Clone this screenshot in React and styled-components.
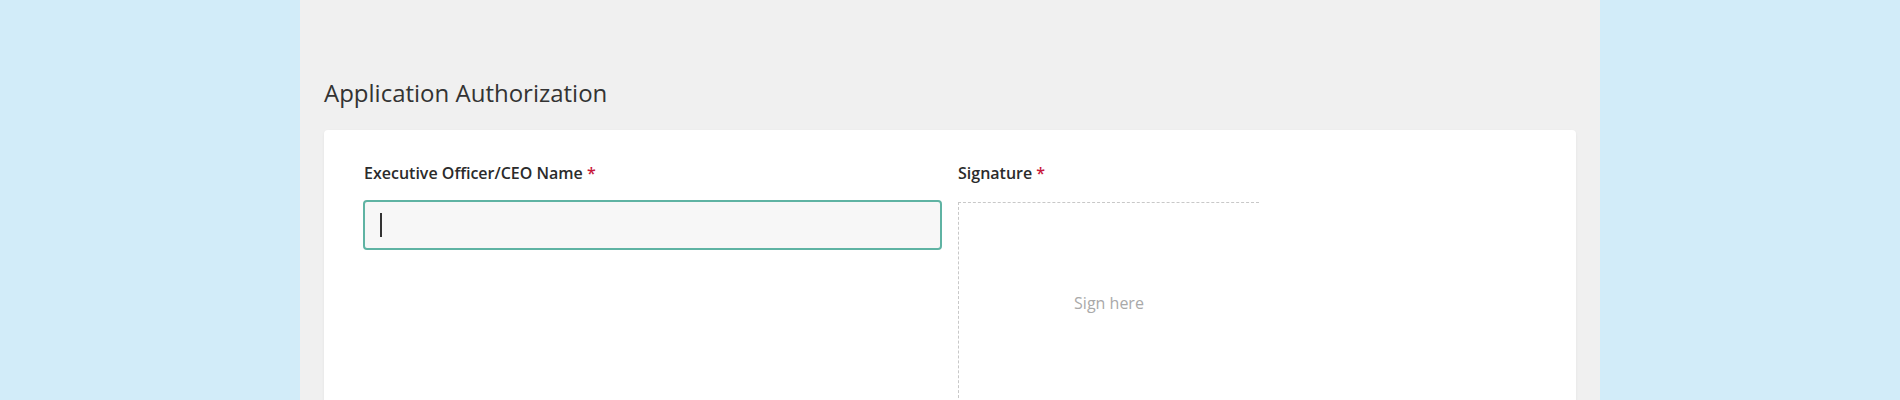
import React from "react";
import styled, { createGlobalStyle } from "styled-components";

const GlobalStyle = createGlobalStyle`
body {
    margin: 0;
    background: #d2ecf9;
    font-family: "Open Sans", "Liberation Sans", sans-serif;
}
`

export default function App(){
    return(
        <>
            <GlobalStyle />
            <Panel>
                <Title>Application Authorization</Title>
                <Card>
                    <Column>
                        <Label>Executive Officer/CEO Name <Required>*</Required></Label>
                        <Field>
                            <Caret />
                        </Field>
                    </Column>
                    <Column>
                        <Label>Signature <Required>*</Required></Label>
                        <SignPad>
                            <Placeholder>Sign here</Placeholder>
                        </SignPad>
                    </Column>
                </Card>
            </Panel>
        </>
    )
}

const Panel = styled.div`
max-width: 1300px;
height: 400px;
margin: 0 auto;
box-sizing: border-box;
padding: 76px 24px 0;
background: #f0f0f0;
overflow: hidden;
`

const Title = styled.h2`
margin: 0 0 21px;
font-size: 24px;
font-weight: 400;
color: #333;
`

const Card = styled.div`
display: grid;
grid-template-columns: 1fr 1fr;
gap: 15px;
padding: 32px 40px 40px 39px;
background: #fff;
border-radius: 4px;
box-shadow: 0 1px 3px rgba(0, 0, 0, 0.06);
`

const Column = styled.div`
display: flex;
flex-direction: column;
`

const Label = styled.div`
margin: 0 0 16px 1px;
font-size: 16px;
font-weight: 600;
color: #2b2b2b;
`

const Required = styled.span`
color: #c8193c;
`

const Field = styled.div`
display: flex;
align-items: center;
height: 50px;
box-sizing: border-box;
padding: 0 15px;
background: #f7f7f7;
border: 2px solid #5fb3a3;
border-radius: 4px;
`

const Caret = styled.span`
width: 1.5px;
height: 24px;
background: #333;
`

const SignPad = styled.div`
display: flex;
align-items: center;
justify-content: center;
width: 300px;
height: 200px;
margin: 2px 0 0 1px;
border-top: 1px dashed #c8c8c8;
border-left: 1px dashed #c8c8c8;
`

const Placeholder = styled.span`
font-size: 16px;
color: #a9a9a9;
`
